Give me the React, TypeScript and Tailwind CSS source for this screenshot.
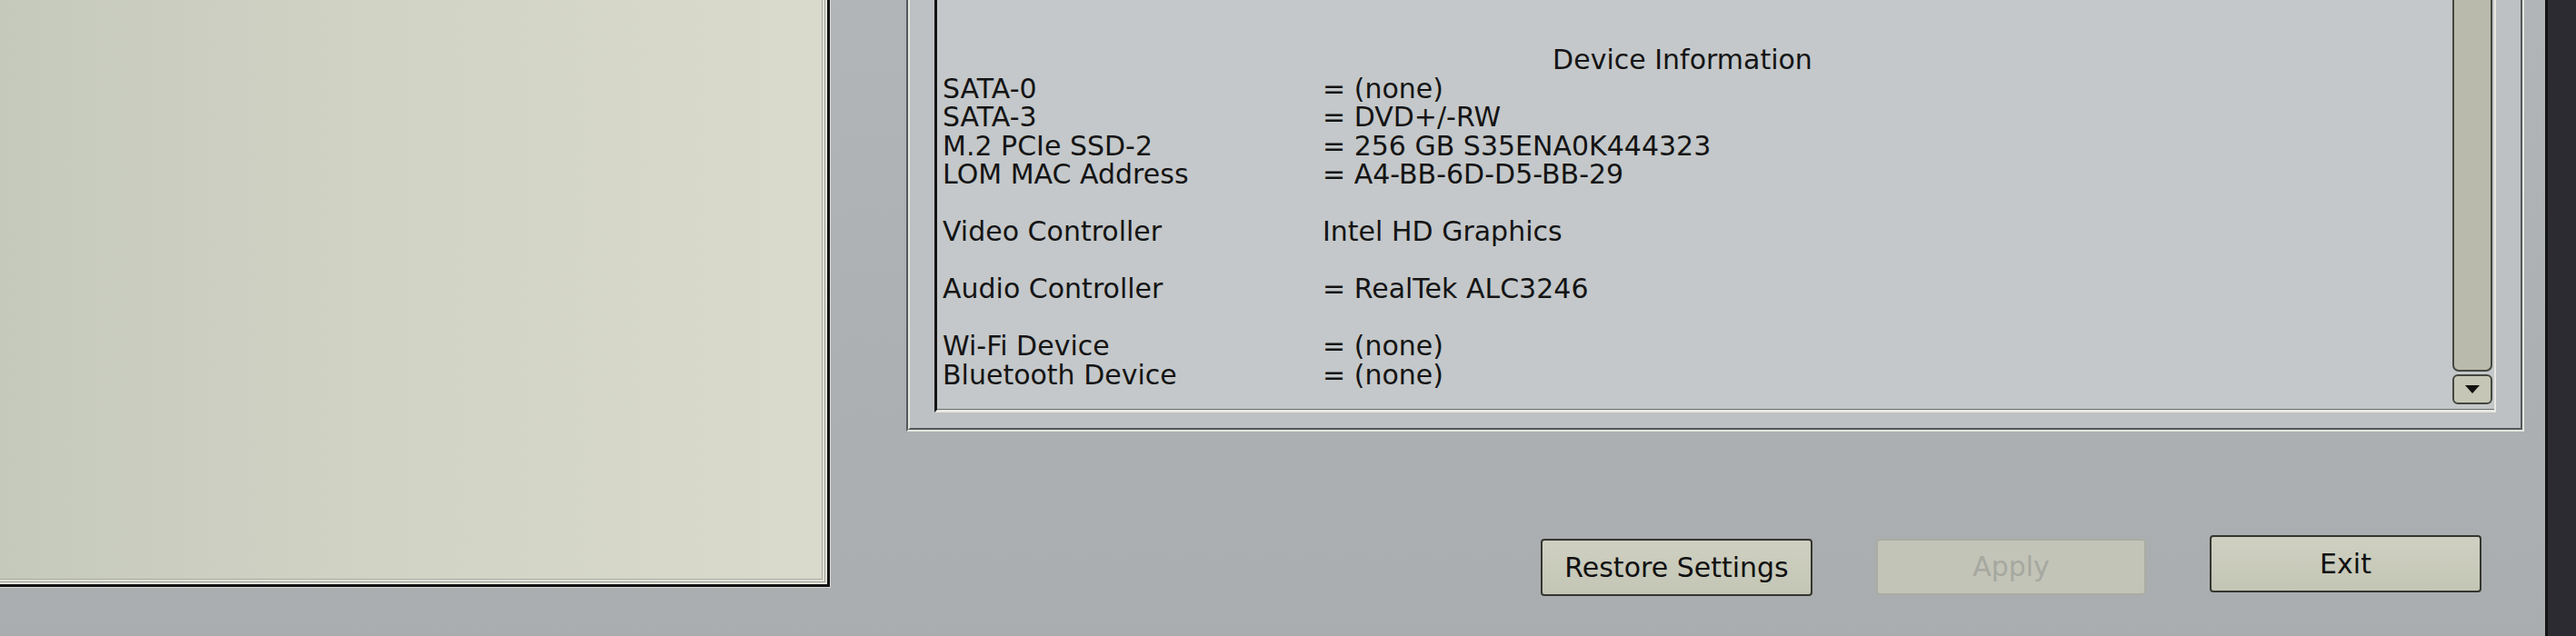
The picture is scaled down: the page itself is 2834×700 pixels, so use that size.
const rows: { label: string; value: string }[] = [
    { label: 'SATA-0', value: '= (none)' },
    { label: 'SATA-3', value: '= DVD+/-RW' },
    { label: 'M.2 PCIe SSD-2', value: '= 256 GB S35ENA0K444323' },
    { label: 'LOM MAC Address', value: '= A4-BB-6D-D5-BB-29' },
    { label: '', value: '' },
    { label: 'Video Controller', value: 'Intel HD Graphics' },
    { label: '', value: '' },
    { label: 'Audio Controller', value: '= RealTek ALC3246' },
    { label: '', value: '' },
    { label: 'Wi-Fi Device', value: '= (none)' },
    { label: 'Bluetooth Device', value: '= (none)' },
];

function SidePanel() {
    return (
        <div className="w-[914px] h-[647px] border-r border-b border-[#d9d9d2]">
            <div className="w-full h-full border-r-[3px] border-b-[3px] border-[#121212]">
                <div className="w-full h-full border-r-2 border-b-2 border-[#e3e3db]">
                    <div className="w-full h-full border-r border-b border-[#9fa198]">
                        <div className="w-full h-full border-r-2 border-b-2 border-[#dfe0d7]">
                            <div className="w-full h-full border-r border-b border-[#aaaca3] bg-linear-to-r from-[#c5c9bc] via-[#d2d4c5] to-[#d9dacb]" />
                        </div>
                    </div>
                </div>
            </div>
        </div>
    );
}

function Scrollbar() {
    return (
        <div className="w-[44px] mr-[2px] mb-[5px] flex flex-col gap-[3px]">
            <div className="flex-1 rounded-b-[7px] border-2 border-t-0 border-[#45463f] bg-[#b9baab]" />
            <div className="h-[33px] rounded-[6px] border-2 border-[#45463f] bg-[#c5c6b5] flex items-center justify-center">
                <svg width="16" height="10" viewBox="0 0 16 10">
                    <polygon points="0,0 16,0 8,9" fill="#111" />
                </svg>
            </div>
        </div>
    );
}

function Button({ label, disabled }: { label: string; disabled?: boolean }) {
    return (
        <div
            className={
                disabled
                    ? 'w-[297px] h-[62px] rounded-[4px] border-2 border-[#aaaca3] bg-[#c2c4b8] flex items-center justify-center text-[#a6a89f]'
                    : 'w-[299px] h-[63px] rounded-[4px] border-2 border-[#35362f] bg-linear-to-b from-[#cfd0c1] to-[#c3c5b5] flex items-center justify-center text-[#111]'
            }
        >
            {label}
        </div>
    );
}

export default function App() {
    return (
        <div className="flex w-[2834px] h-[700px] overflow-hidden bg-linear-to-b from-[#b1b5b8] to-[#a9adb0] font-['DejaVu_Sans',sans-serif] text-[30px] leading-[31.5px] text-[#141414]">
            <div className="w-[997px] shrink-0">
                <SidePanel />
            </div>

            <div className="w-[1803px] shrink-0 flex flex-col">
                <div className="w-[1780px] h-[475px] border-l-2 border-r-2 border-b-2 border-l-[#55585a] border-r-[#e4e5df] border-b-[#e4e5df]">
                    <div className="w-full h-full border-l-2 border-r-2 border-b-2 border-l-[#e4e5df] border-r-[#55585a] border-b-[#55585a] bg-[#bdc1c3] pl-[27px] pr-[27px] pb-[17px]">
                        <div className="h-full border-l-[3px] border-l-[#141414] border-r-2 border-r-[#e8e8e2] border-b-[3px] border-b-[#e8e8e2]">
                            <div className="h-full flex border-b border-[#6b6e70] bg-[#c4c8ca]">
                                <div className="flex-1 pt-[50px] pl-[6px]">
                                    <div className="w-[1628px] text-center">Device Information</div>
                                    {rows.map((r, i) => (
                                        <div key={i} className="flex h-[31.5px]">
                                            <div className="w-[418px] shrink-0">{r.label}</div>
                                            <div>{r.value}</div>
                                        </div>
                                    ))}
                                </div>
                                <Scrollbar />
                            </div>
                        </div>
                    </div>
                </div>

                <div className="mt-[118px] pl-[698px] flex items-start gap-[70px]">
                    <Button label="Restore Settings" />
                    <Button label="Apply" disabled />
                    <div className="-mt-[4px]">
                        <Button label="Exit" />
                    </div>
                </div>
            </div>

            <div className="flex-1 bg-[#2b2b31] border-l-[3px] border-[#141416]" />
        </div>
    );
}
